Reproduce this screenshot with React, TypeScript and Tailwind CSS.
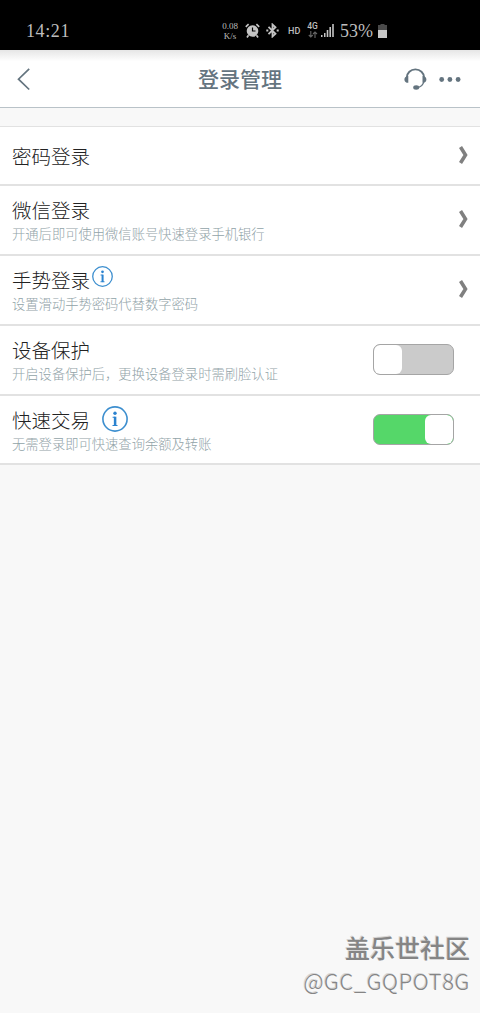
import { useState } from "react";

type Item = {
  title: string;
  desc?: string;
  info?: "small" | "large";
  toggle?: boolean;
  height: string;
};

const items: Item[] = [
  { title: "密码登录", height: "h-[59px]" },
  {
    title: "微信登录",
    desc: "开通后即可使用微信账号快速登录手机银行",
    height: "h-[70px]",
  },
  {
    title: "手势登录",
    desc: "设置滑动手势密码代替数字密码",
    info: "small",
    height: "h-[70px]",
  },
  {
    title: "设备保护",
    desc: "开启设备保护后，更换设备登录时需刷脸认证",
    toggle: false,
    height: "h-[70px]",
  },
  {
    title: "快速交易",
    desc: "无需登录即可快速查询余额及转账",
    info: "large",
    toggle: true,
    height: "h-[69px]",
  },
];

function StatusBar() {
  return (
    <div className="flex h-[50px] items-center bg-black pt-[11px] pl-[26px] font-['Liberation_Serif','Noto_Sans_CJK_SC',serif] text-[#bdbdbd]">
      <span className="w-[195px] text-[18px] leading-5 tracking-[0.6px]">14:21</span>
      <div className="flex w-[18px] flex-col items-center text-[9px] leading-[10px]">
        <span>0.08</span>
        <span>K/s</span>
      </div>
      <svg className="ml-1.5 h-[15px] w-[15px]" viewBox="0 0 15 15" fill="none" stroke="#c4c4c4">
        <circle cx="7.5" cy="8" r="5.8" fill="#c4c4c4" stroke="none" />
        <path d="M.8 3.8 3.6 1.2M14.2 3.8l-2.8-2.6M3.5 12.3 2 14.5M11.5 12.3l1.5 2.2" strokeWidth="1.7" />
        <path d="M7.5 4.5V8h3" stroke="#000" strokeWidth="1.2" />
      </svg>
      <svg className="ml-[6px] h-[15px] w-[13px]" viewBox="0 0 13 15" fill="none" stroke="#c4c4c4" strokeWidth="1.8">
        <path d="m2.5 3.8 7 7-3 2.7v-12l3 2.7-7 7" />
        <path d="M.3 7.5h2M10.7 7.5h2" />
      </svg>
      <span className="ml-[9px] w-[13px] font-['Roboto',sans-serif] text-[9px] leading-3 font-medium">HD</span>
      <div className="ml-[6px] flex h-[17px] w-[11px] flex-col items-center">
        <span className="font-['Roboto',sans-serif] text-[8.5px] leading-[9px] font-medium">4G</span>
        <svg className="h-[7px] w-[10px]" viewBox="0 0 10 7" fill="none" stroke="#666" strokeWidth="1.1">
          <path d="M2.8 0v6M.8 4l2 2 2-2M7 7V1M5 3l2-2 2 2" />
        </svg>
      </div>
      <svg className="mb-px ml-[3px] h-[14px] w-[13px]" viewBox="0 0 13 14" fill="#c4c4c4">
        <path d="M0 12h1.5v2H0zM3 10h1.5v4H3zM5.7 7h1.6v7H5.7zM8.4 4H10v10H8.4zM11.2 1h1.6v13h-1.6z" />
      </svg>
      <span className="ml-[6px] w-[33px] text-[18px] leading-5">53%</span>
      <svg className="ml-[5px] h-[14px] w-[9px]" viewBox="0 0 9 14">
        <path d="M2.5 0h4v1H9v6H0V1h2.5z" fill="#4a4a4a" />
        <path d="M0 6h9v8H0z" fill="#c8c8c8" />
      </svg>
    </div>
  );
}

function Header() {
  return (
    <header className="flex h-[58px] items-center border-b border-[#b9c2c8] bg-linear-to-b from-[#e6e6e6] via-white via-20% to-white pr-[18px] pl-[17px] text-[#64747f]">
      <button type="button" aria-label="返回" className="w-[57px]">
        <svg className="h-[24px] w-[14px]" viewBox="0 0 14 24" fill="none" stroke="currentColor" strokeWidth="1.7">
          <path d="M12.2 1.8 1.5 12.2l10.7 10.3" />
        </svg>
      </button>
      <h1 className="flex-1 pb-px pl-[2px] text-center text-[21px] leading-7 font-medium">登录管理</h1>
      <div className="flex w-[58px] items-center gap-[12px] pt-px">
        <svg className="h-[22px] w-[23px] shrink-0" viewBox="0 0 23 22" fill="none" stroke="currentColor">
          <path d="M2.8 9.5C3 4.8 6.5 1.4 11.4 1.4s8.5 3.4 8.7 8.1" strokeWidth="1.9" />
          <path d="M20 13c-.7 3.8-3.2 6.3-7.3 6.7" strokeWidth="1.3" />
          <path d="M4.3 8v6.8C2 14.8.4 13.5.4 11.4S2 8 4.3 8zM18.5 8v6.8c2.3 0 3.9-1.3 3.9-3.4S20.8 8 18.5 8z" fill="currentColor" stroke="none" />
          <ellipse cx="12.2" cy="19.5" rx="3" ry="2.2" fill="currentColor" stroke="none" />
        </svg>
        <svg className="h-[5px] w-[22px] shrink-0" viewBox="0 0 22 5" fill="currentColor">
          <circle cx="2.7" cy="2.5" r="2.4" />
          <circle cx="10.9" cy="2.5" r="2.4" />
          <circle cx="19.1" cy="2.5" r="2.4" />
        </svg>
      </div>
    </header>
  );
}

function InfoIcon({ className }: { className: string }) {
  return (
    <svg className={className} viewBox="0 0 26 26" fill="none" stroke="#3d8fcf">
      <circle cx="13" cy="13" r="12.1" strokeWidth="1.6" />
      <circle cx="13" cy="7.2" r="1.7" fill="#2b83d0" stroke="none" />
      <path d="M10.6 11.2h2.5M10.5 19.5h5" stroke="#2b83d0" strokeWidth="1.1" />
      <path d="M13.1 10.7v9.2" stroke="#2b83d0" strokeWidth="2.5" />
    </svg>
  );
}

function Toggle({ defaultOn }: { defaultOn: boolean }) {
  const [on, setOn] = useState(defaultOn);

  return (
    <button
      type="button"
      role="switch"
      aria-checked={on}
      onClick={() => setOn(!on)}
      className={`mr-[14px] mb-px flex h-[31px] w-[81px] overflow-hidden rounded-[7px] border border-[#a5a5a5] ${
        on ? "justify-end bg-[#55d769]" : "justify-start bg-[#cbcbcb]"
      }`}
    >
      <span className="h-full w-[28px] rounded-[6px] bg-white" />
    </button>
  );
}

function Row({ item }: { item: Item }) {
  return (
    <li className={`flex items-center justify-between border-b-2 border-[#e2e2e2] bg-white pr-3 pl-3 ${item.height}`}>
      <div>
        <div className="flex h-[26px] items-center">
          <span className="text-[19.5px] leading-[26px] font-light text-[#222]">{item.title}</span>
          {item.info === "small" && <InfoIcon className="mb-[7px] ml-[2px] h-[21px] w-[21px]" />}
          {item.info === "large" && <InfoIcon className="mb-px ml-[12px] h-[26px] w-[26px]" />}
        </div>
        {item.desc && (
          <p className="pt-px text-[13.3px] leading-[19px] font-light text-[#91a3a8]">{item.desc}</p>
        )}
      </div>
      {item.toggle === undefined ? (
        <svg className="mb-[2px] h-[18px] w-[9px]" viewBox="0 0 9 18" fill="none" stroke="#808080" strokeWidth="3.6">
          <path d="m1.5 1 5 8-5 8" />
        </svg>
      ) : (
        <Toggle defaultOn={item.toggle} />
      )}
    </li>
  );
}

export default function App() {
  return (
    <main className="flex h-[1013px] w-[480px] flex-col overflow-hidden bg-[#f8f8f8] font-['Noto_Sans_CJK_SC',sans-serif]">
      <StatusBar />
      <Header />
      <ul className="mt-[18px] border-t border-[#e2e2e2]">
        {items.map((item) => (
          <Row key={item.title} item={item} />
        ))}
      </ul>
      <footer className="mt-auto pr-[10px] pb-[18px] text-right text-[#858585] [text-shadow:-1px_-1px_0_#d5d5d5]">
        <p className="text-[25px] leading-[35px] font-medium">盖乐世社区</p>
        <p className="text-[22px] leading-[30px] font-light tracking-[0.6px]">@GC_GQPOT8G</p>
      </footer>
    </main>
  );
}
